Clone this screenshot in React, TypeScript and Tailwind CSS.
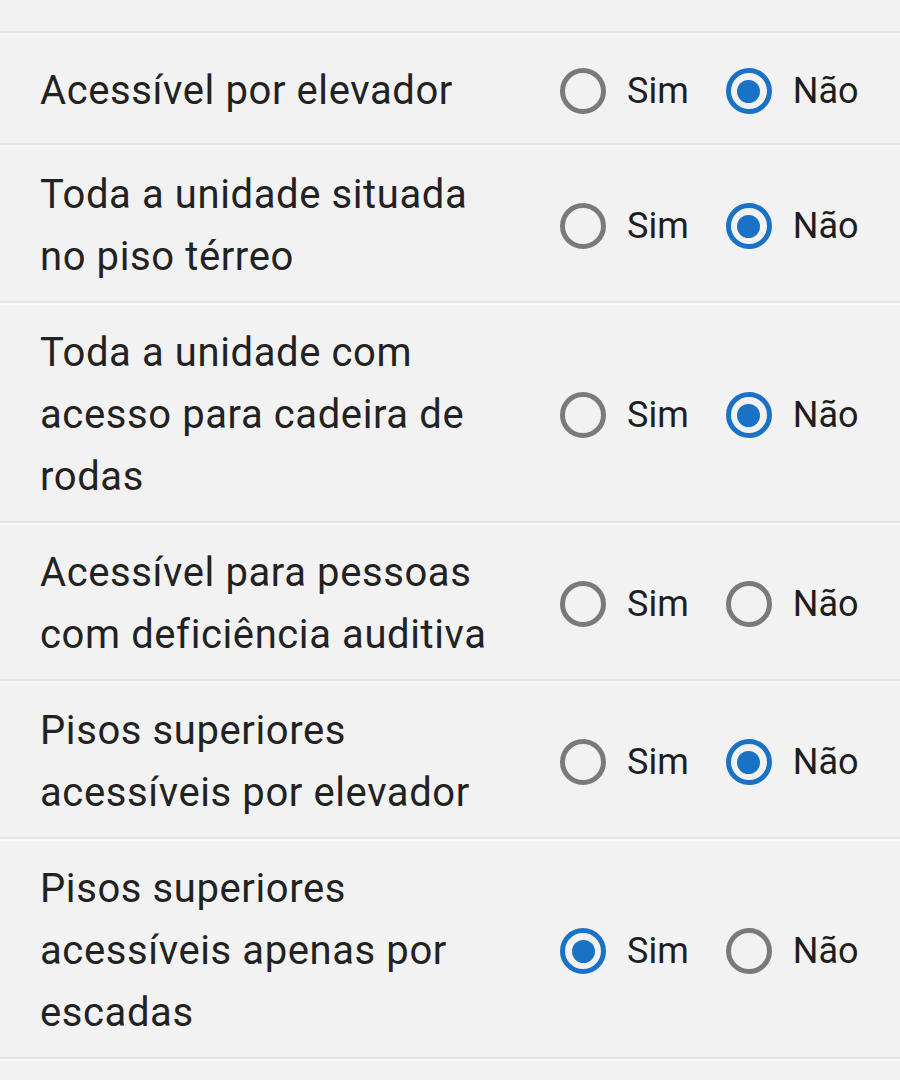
import React from 'react'

interface Item {
  id: number
  label: string
  value: 'sim' | 'nao' | null
}

const items: Item[] = [
  { id: 1, label: 'Acessível por elevador', value: 'nao' },
  { id: 2, label: 'Toda a unidade situada no piso térreo', value: 'nao' },
  { id: 3, label: 'Toda a unidade com acesso para cadeira de rodas', value: 'nao' },
  { id: 4, label: 'Acessível para pessoas com deficiência auditiva', value: null },
  { id: 5, label: 'Pisos superiores acessíveis por elevador', value: 'nao' },
  { id: 6, label: 'Pisos superiores acessíveis apenas por escadas', value: 'sim' },
]

function Divider() {
  return (
    <div>
      <div className="h-[2px] bg-[#e4e4e4]" />
      <div className="h-[2px] bg-[#f9f9f9]" />
    </div>
  )
}

function Radio({ checked, label }: { checked: boolean; label: string }) {
  return (
    <label className="flex items-center gap-[21px]">
      <span
        className={`flex items-center justify-center w-[46px] h-[46px] rounded-full border-[5px] ${
          checked ? 'border-[#1a72c6]' : 'border-[#7a7a7a]'
        }`}
      >
        {checked && <span className="w-[23px] h-[23px] rounded-full bg-[#1a72c6]" />}
      </span>
      <span className="text-[36px] leading-[62px] text-[#1e1e1e]">{label}</span>
    </label>
  )
}

export default function App() {
  return (
    <div className="w-[900px] h-[1080px] overflow-hidden bg-[#f2f2f2]" style={{ fontFamily: 'Roboto, "Noto Sans", sans-serif' }}>
      <div className="h-[31px]" />
      <Divider />
      {items.map((item) => (
        <div key={item.id}>
          <div className="flex items-center min-h-[108px] pt-[17px] pb-[13px] pl-10 pr-6">
            <div className="w-[470px] text-[40px] leading-[62px] tracking-[0.6px] text-[#222222]">{item.label}</div>
            <div className="flex items-center gap-[37px] ml-[50px]">
              <Radio checked={item.value === 'sim'} label="Sim" />
              <Radio checked={item.value === 'nao'} label="Não" />
            </div>
          </div>
          <Divider />
        </div>
      ))}
    </div>
  )
}
